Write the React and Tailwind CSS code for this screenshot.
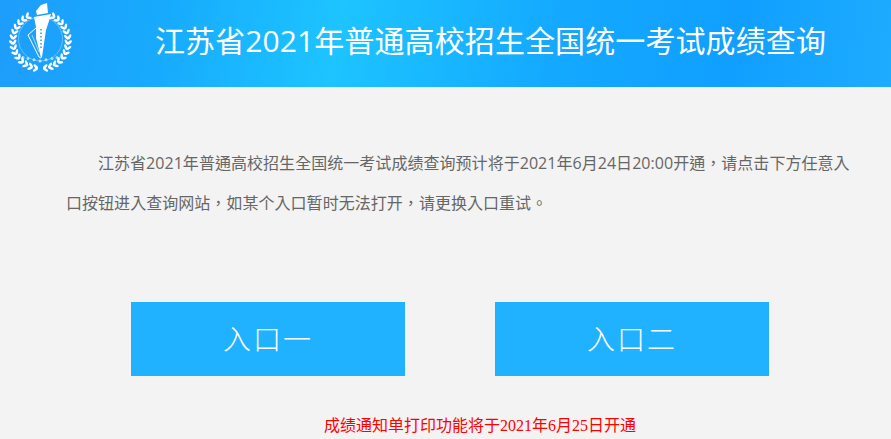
import React from 'react';

// laurel leaves, angle measured from the bottom of the wreath
const wreathAngles = [6, 17, 28, 39, 50, 61, 72, 83, 94, 105, 116, 127, 138, 149];

const Logo = () => (
  <svg width="80" height="87" viewBox="0 0 80 87" className="shrink-0">
    {[-1, 1].map((side) =>
      wreathAngles.map((a) => {
        const r = (a * Math.PI) / 180;
        const x = 40.5 + side * 27.5 * Math.sin(r);
        const y = 41 + 27.5 * Math.cos(r);
        const deg = (Math.atan2(-Math.sin(r), side * Math.cos(r)) * 180) / Math.PI;
        return (
          <g key={`${side}-${a}`} transform={`translate(${x} ${y}) rotate(${deg})`}>
            <ellipse cx="2.6" cy="0" rx="2.9" ry="1.3" fill="#fff" transform="rotate(38)" />
            <ellipse cx="2.6" cy="0" rx="2.9" ry="1.3" fill="#fff" transform="rotate(-38)" />
          </g>
        );
      })
    )}
    <circle cx="40.5" cy="39" r="22" fill="none" stroke="#fff" strokeOpacity="0.4" strokeWidth="0.8" />
    {[-17, -12, -6, 0, 6, 12, 17].map((dx) => (
      <circle key={dx} cx={40 + dx} cy={61 - Math.abs(dx) * 0.2} r="1.5" fill="#fff" fillOpacity="0.65" />
    ))}
    <path d="M36 11 L41 5 L47 3 L48 13 L37 15 Z" fill="#fff" />
    <path d="M34 17 L51 14 L49 21 L46 30 L42 57 L41 58 L36 38 L36 27 Z" fill="#fff" />
    <path d="M36 28 L28 35 L39 57 L41 58" fill="none" stroke="#fff" strokeWidth="1" />
    <path d="M32 35 L39 52" stroke="#fff" strokeOpacity="0.7" strokeWidth="0.8" />
    <path d="M41 29 V48" stroke="#2aa5f0" strokeWidth="1.6" strokeDasharray="1.5 2" />
  </svg>
);

const EntryButton = ({ label }) => (
  <a
    href="#"
    className="flex h-[74px] w-[274px] items-center justify-center bg-[#20b2ff] font-light text-[28px] tracking-[2px] text-white"
  >
    {label}
  </a>
);

const Num = ({ children }) => <span className="font-['Liberation_Serif',serif] leading-none">{children}</span>;

export default function App() {
  return (
    <div className="h-[439px] w-[891px] overflow-hidden bg-[#f3f3f3] font-['Open_Sans','Noto_Sans_CJK_SC',sans-serif]">
      <header className="flex h-[87px] items-start bg-[linear-gradient(100deg,#1e9dfb_0%,#17aafd_18%,#1dc4ff_38%,#14a9ff_62%,#109fff_82%,#1eacff_100%)]">
        <Logo />
        <h1 className="ml-[75px] mt-[19px] text-[30px] leading-[44px] tracking-[0.1px] whitespace-nowrap text-white">
          江苏省2021年普通高校招生全国统一考试成绩查询
        </h1>
      </header>

      <main>
        {/* TC font because its full-width comma sits centred like the original */}
        <p className="ml-[66px] mt-[56px] w-[787px] indent-8 font-['Open_Sans','Noto_Sans_CJK_TC',sans-serif] text-[16px] leading-[40px] tracking-[0.04px] text-[#666]">
          江苏省2021年普通高校招生全国统一考试成绩查询预计将于2021年6月24日20:00开通，请点击下方任意入口按钮进入查询网站，如某个入口暂时无法打开，请更换入口重试。
        </p>

        <div className="mt-[79px] flex gap-[90px] pl-[131px]">
          <EntryButton label="入口一" />
          <EntryButton label="入口二" />
        </div>

        <p className="mt-[35px] pl-[324px] text-[16px] leading-[28px] whitespace-nowrap text-[#f00]">
          成绩通知单打印功能将于<Num>2021</Num>年<Num>6</Num>月<Num>25</Num>日开通
        </p>
      </main>
    </div>
  );
}
